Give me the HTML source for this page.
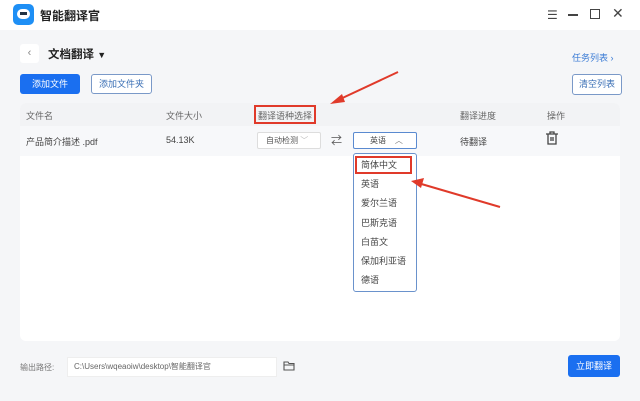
<!DOCTYPE html>
<html><head><meta charset="utf-8"><style>
*{margin:0;padding:0;box-sizing:border-box}
body{width:640px;height:401px;background:#f5f6f8;font-family:"Liberation Sans","Noto Sans CJK SC",sans-serif;position:relative;overflow:hidden;color:#333}
.a{position:absolute}
.t{font-size:9px;color:#666}
</style></head><body>
<div class="a" style="left:0;top:0;width:640px;height:30px;background:#fff"></div>
<div class="a" style="left:13px;top:4px;width:21px;height:21px;border-radius:5px;background:#1e8ff5"></div>
<div class="a" style="left:17px;top:9px;width:13px;height:10px;border-radius:5px;background:#fff"></div>
<div class="a" style="left:20px;top:12px;width:7px;height:3px;background:#234"></div>
<div class="a" style="left:40px;top:7px;font-size:12px;font-weight:bold;color:#222">智能翻译官</div>
<div class="a" style="left:547px;top:8px;font-size:12px;color:#444">☰</div>
<div class="a" style="left:568px;top:14px;width:10px;height:1.5px;background:#444"></div>
<div class="a" style="left:590px;top:9px;width:10px;height:10px;border:1.5px solid #444"></div>
<div class="a" style="left:612px;top:5px;font-size:14px;color:#444">✕</div>

<div class="a" style="left:20px;top:44px;width:19px;height:19px;background:#fff;border-radius:3px;color:#888;font-size:11px;text-align:center;line-height:19px">‹</div>
<div class="a" style="left:48px;top:46px;font-size:11.5px;font-weight:bold;color:#222">文档翻译 <span style="font-size:9px">▼</span></div>
<div class="a" style="left:572px;top:51px;font-size:9px;color:#3a7bd5">任务列表 ›</div>

<div class="a" style="left:20px;top:74px;width:60px;height:20px;background:#1a6ff0;border-radius:3px;color:#fff;font-size:9px;text-align:center;line-height:20px">添加文件</div>
<div class="a" style="left:91px;top:74px;width:61px;height:20px;background:#fff;border:1px solid #7a99c8;border-radius:3px;color:#3a6fb5;font-size:9px;text-align:center;line-height:18px">添加文件夹</div>
<div class="a" style="left:572px;top:74px;width:50px;height:21px;background:#fff;border:1px solid #7a99c8;border-radius:3px;color:#3a6fb5;font-size:9px;text-align:center;line-height:19px">清空列表</div>

<div class="a" style="left:20px;top:103px;width:600px;height:238px;background:#fff;border-radius:6px;overflow:hidden">
<div style="height:23px;background:#f2f3f5"></div>
</div>
<div class="a t" style="left:26px;top:109px">文件名</div>
<div class="a t" style="left:166px;top:109px">文件大小</div>
<div class="a t" style="left:258px;top:109px">翻译语种选择</div>
<div class="a" style="left:254px;top:105px;width:62px;height:19px;border:2px solid #e03a2a"></div>
<div class="a t" style="left:460px;top:109px">翻译进度</div>
<div class="a t" style="left:547px;top:109px">操作</div>

<div class="a" style="left:20px;top:126px;width:600px;height:30px;background:#f7f8fa"></div>
<div class="a t" style="left:26px;top:135px;color:#444">产品简介描述 .pdf</div>
<div class="a t" style="left:166px;top:135px;color:#444">54.13K</div>
<div class="a" style="left:257px;top:132px;width:64px;height:17px;border:1px solid #ddd;border-radius:2px;background:#fff;font-size:8px;color:#555;padding-left:8px;line-height:15px">自动检测 <span style="color:#bbb">﹀</span></div>
<div class="a" style="left:331px;top:132px;font-size:11px;color:#555">⇄</div>
<div class="a" style="left:353px;top:132px;width:64px;height:17px;border:1px solid #5a8ad0;border-radius:2px;background:#fff;font-size:8px;color:#444;padding-left:16px;line-height:15px">英语 &nbsp;&nbsp;&nbsp;<span style="color:#777">︿</span></div>
<div class="a t" style="left:460px;top:135px;color:#444">待翻译</div>
<svg class="a" style="left:545px;top:131px" width="14" height="15"><g fill="none" stroke="#444" stroke-width="1.3"><path d="M1 3H13M5 3V1H9V3M3 3V13H11V3M6 6V10M8 6V10"/></g></svg>

<div class="a" style="left:353px;top:153px;width:64px;height:139px;border:1px solid #6a92cc;border-radius:3px;background:#fff"></div>
<div class="a" style="left:355px;top:156px;width:57px;height:18px;border:2px solid #e03a2a"></div>
<div class="a" style="left:361px;top:156px;font-size:9px;color:#444;line-height:19.2px">简体中文<br>英语<br>爱尔兰语<br>巴斯克语<br>白苗文<br>保加利亚语<br>德语</div>

<svg class="a" style="left:0;top:0" width="640" height="401">
<g stroke="#e03a2a" stroke-width="2" fill="#e03a2a">
<line x1="398" y1="72" x2="336" y2="101"/><polygon points="330,104 342,94 345,102" stroke="none"/>
<line x1="500" y1="207" x2="418" y2="183"/><polygon points="411,181 424,178 421,188" stroke="none"/>
</g></svg>

<div class="a" style="left:20px;top:362px;font-size:8px;color:#777">输出路径:</div>
<div class="a" style="left:67px;top:357px;width:210px;height:20px;background:#fff;border:1px solid #eee;font-size:8px;color:#666;padding-left:6px;line-height:18px">C:\Users\wqeaoiw\desktop\智能翻译官</div>
<svg class="a" style="left:283px;top:361px" width="12" height="10"><path d="M1 1H5L6 2.5H11V9H1Z M1 4H11" fill="none" stroke="#555" stroke-width="1.1"/></svg>
<div class="a" style="left:568px;top:355px;width:52px;height:22px;background:#1a6ff0;border-radius:3px;color:#fff;font-size:9px;text-align:center;line-height:22px">立即翻译</div>
</body></html>
